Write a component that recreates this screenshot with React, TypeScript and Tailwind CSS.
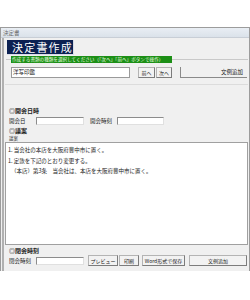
import React from "react";

const jp = { fontFamily: '"Noto Sans CJK JP", "Noto Sans", sans-serif' };

function Btn({ label, className = "" }: { label: string; className?: string }) {
  return (
    <div
      className={
        "h-[11px] flex items-center justify-center whitespace-nowrap bg-[#f2f2f2] border border-[#b4b4b4] border-b-[#7c7c7c] border-r-[#7c7c7c] text-[5px] text-[#222] " +
        className
      }
    >
      {label}
    </div>
  );
}

export default function App() {
  return (
    <div className="w-[250px] h-[300px] bg-white pt-[27px]" style={jp}>
      <div className="h-[244px] bg-[#f0f0f0] border border-[#9c9c9c] border-b-0 flex flex-col">
        <div className="h-[10px] bg-gradient-to-b from-[#e9eef4] to-[#dbe2ea] border-b border-[#c8ced6] text-[5.5px] leading-[10px] text-[#6a6a6a] pl-[2px]">
          決定書
        </div>

        <div className="flex-1 flex flex-col border-l-[2px] border-[#b0b0b0] ml-[1px]">
          <div className="mt-[2px] ml-[3px] w-[67px] h-[15px] bg-[#0c2152] border border-[#d8dde8] border-l-0 border-t-0 text-white text-[11px] leading-[15px] tracking-[1.2px] pl-[5px]">
            決定書作成
          </div>

          <div className="relative mt-[4px] ml-[2px] mr-[1px] border-t border-[#c9c9c9] h-[25px]">
            <div className="absolute left-[5px] top-[-4px] w-[161px] h-[7px] bg-[#1c8f16] text-[#e8ffe0] text-[4.6px] leading-[7px] whitespace-nowrap overflow-hidden pl-[1px]">
              作成する書類の種類を選択してください（「次へ」「前へ」ボタンで操作）
            </div>
            <div className="flex items-center mt-[7px] pl-[5px] pr-[1px]">
              <div className="w-[119px] h-[11px] bg-white border border-[#9a9a9a] text-[5.5px] leading-[9px] pl-[1px] text-[#222]">
                洋写印鑑
              </div>
              <Btn label="前へ" className="w-[17px] ml-[8px]" />
              <Btn label="次へ" className="w-[16px] ml-[1px]" />
              <div className="ml-[8px] flex-1 h-[11px] border-b border-l border-[#8a8a8a] text-[5.5px] leading-[10px] text-right pr-[4px] text-[#222]">
                文例追加
              </div>
            </div>
          </div>

          <div className="mx-[1px] border-t border-[#dcdcdc]" />

          <div className="mt-[22px] pl-[5px] text-[6px] font-bold leading-[7px] text-[#222]">◎開会日時</div>
          <div className="flex items-center mt-[3px] pl-[5px] text-[5.5px] text-[#222]">
            <span className="w-[27px]">開会日</span>
            <div className="w-[48px] h-[8px] bg-white border border-[#8c8c8c] border-b-[#e0e0e0] border-r-[#e0e0e0]" />
            <span className="ml-[6px] w-[27px]">開会時刻</span>
            <div className="w-[47px] h-[8px] bg-white border border-[#8c8c8c] border-b-[#e0e0e0] border-r-[#e0e0e0]" />
          </div>
          <div className="mt-[2px] pl-[5px] text-[6px] font-bold leading-[7px] text-[#222]">◎議案</div>
          <div className="mt-[2px] pl-[5px] text-[4.5px] leading-[5px] text-[#333]">議案</div>

          <div className="mt-[1px] ml-[1px] mr-[1px] h-[103px] bg-white border border-[#a0a0a0] px-[2px] pt-[2px] text-[5.5px] leading-[10.5px] text-[#222]">
            <div>1. 当会社の本店を大阪府豊中市に置く。</div>
            <div>1. 定款を下記のとおり変更する。</div>
            <div className="pl-[3px]">（本店）第3条　当会社は、本店を大阪府豊中市に置く。</div>
          </div>

          <div className="mt-[2px] pl-[5px] text-[6px] font-bold leading-[7px] text-[#222]">◎閉会時刻</div>
          <div className="flex items-center mt-[1px] pl-[5px] text-[5.5px] text-[#222]">
            <span className="w-[27px]">閉会時刻</span>
            <div className="w-[48px] h-[8px] bg-white border border-[#8c8c8c] border-b-[#e0e0e0] border-r-[#e0e0e0]" />
            <Btn label="プレビュー" className="w-[30px] ml-[4px]" />
            <Btn label="印刷" className="w-[20px] ml-[1px]" />
            <Btn label="Word形式で保存" className="w-[43px] ml-[3px]" />
            <Btn label="文例追加" className="w-[58px] ml-[4px]" />
          </div>
        </div>
      </div>
    </div>
  );
}
